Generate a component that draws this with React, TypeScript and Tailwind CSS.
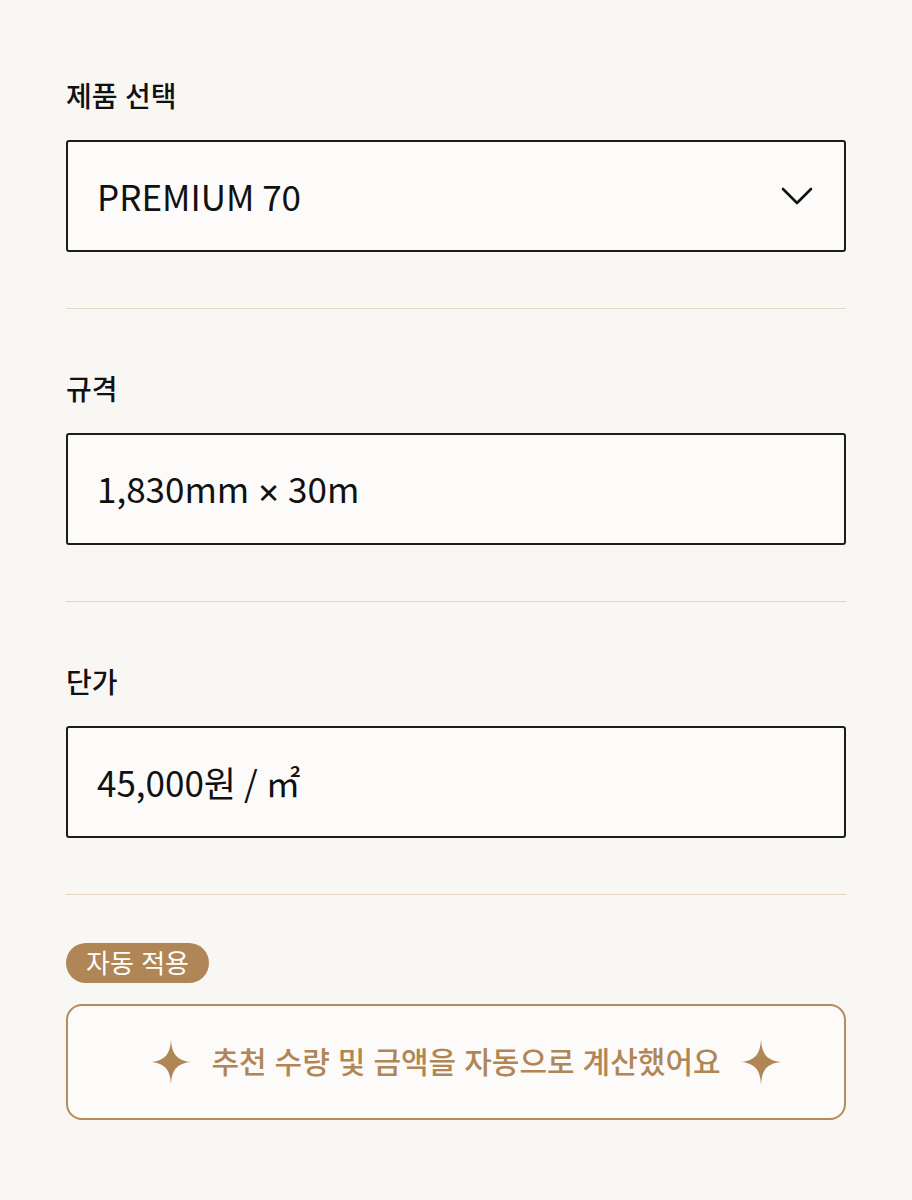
import { ReactNode } from "react";

const font = { fontFamily: 'Inter, "Noto Sans CJK KR", sans-serif' };
const valueFont = { fontFamily: '"Noto Sans CJK KR", "Noto Sans", sans-serif' };

function Sparkle() {
  return (
    <svg width="40" height="46" viewBox="0 0 40 46" className="shrink-0 text-[#b08656]">
      <path
        d="M20 0 C20.6 14 25 21.4 40 23 C25 24.6 20.6 32 20 46 C19.4 32 15 24.6 0 23 C15 21.4 19.4 14 20 0 Z"
        fill="currentColor"
      />
    </svg>
  );
}

function Field({ label, children }: { label: string; children: ReactNode }) {
  return (
    <div className="flex flex-col">
      <div className="h-8 text-[28px] leading-8 font-medium text-[#111]">{label}</div>
      <div
        className="mt-[27px] flex h-[112px] items-center justify-between rounded-[3px] border-2 border-[#1c1c1c] bg-[#fcfbf9] pl-[29px] pr-[31px] text-[35px] text-[#111]"
        style={valueFont}
      >
        {children}
      </div>
    </div>
  );
}

function Divider() {
  return <div className="mt-14 mb-[65px] h-px bg-[#e6d6c4]" />;
}

export default function App() {
  return (
    <div className="min-h-[1200px] bg-[#f9f7f4] px-[66px] pt-[81px]" style={font}>
      <Field label="제품 선택">
        <span>PREMIUM 70</span>
        <svg width="32" height="20" viewBox="0 0 32 20" fill="none">
          <path d="M2 3 L16 17 L30 3" stroke="#111" strokeWidth="2.6" strokeLinecap="round" strokeLinejoin="round" />
        </svg>
      </Field>
      <Divider />
      <Field label="규격">
        <span>
          1,830mm <span style={font}>×</span> 30m
        </span>
      </Field>
      <Divider />
      <Field label="단가">
        <span>45,000원 / ㎡</span>
      </Field>
      <div className="mt-14 h-px bg-[#e6d6c4]" />

      <div className="mt-[48px] flex">
        <span className="flex h-10 items-center rounded-full bg-[#b08656] px-5 text-[26px] text-white">
          자동 적용
        </span>
      </div>
      <div className="mt-[21px] flex h-[116px] items-center justify-center gap-[20px] rounded-[16px] border-2 border-[#b48b5c] bg-[#fcfbf9] pl-5">
        <Sparkle />
        <span className="text-[30px] font-medium text-[#b08656]">추천 수량 및 금액을 자동으로 계산했어요</span>
        <Sparkle />
      </div>
    </div>
  );
}
